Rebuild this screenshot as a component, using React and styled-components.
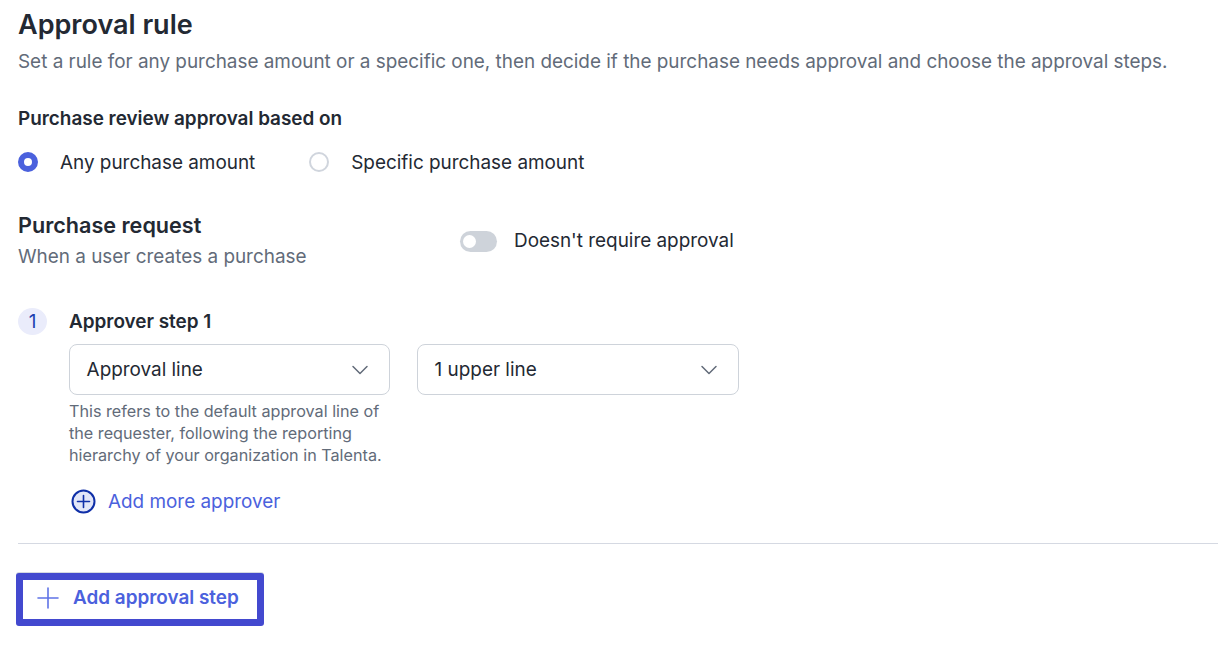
import React from "react";
import styled, { createGlobalStyle } from "styled-components";

const Global = createGlobalStyle`
  html, body { margin: 0; padding: 0; background: #fff; }
  body { font-family: Inter, "Liberation Sans", sans-serif; color: #232933; overflow: hidden; }
`;
const Page = styled.div`
  width: 1218px; height: 649px; box-sizing: border-box; padding: 8px 0 0 18px; overflow: hidden;
`;
const Title = styled.h1`
  margin: 0; font-size: 27px; line-height: 34px; font-weight: 600;
`;
const Subtitle = styled.p`
  margin: 7px 0 0; font-size: 18.9px; line-height: 26px; color: #626b79; white-space: nowrap;
`;
const Label = styled.div`
  margin-top: 31px; font-size: 18.9px; line-height: 26px; font-weight: 600;
`;
const RadioRow = styled.div`
  display: flex; align-items: center; gap: 54px; margin-top: 17px; height: 26px;
`;
const RadioItem = styled.div`
  display: flex; align-items: center; gap: 22px; font-size: 18.9px;
`;
const RadioDot = styled.span`
  width: 20px; height: 20px; box-sizing: border-box; border-radius: 50%;
  border: ${p => (p.$on ? "6px solid #4b61dd" : "2px solid #d0d5dd")}; background: #fff;
`;
const RequestRow = styled.div`
  display: flex; margin-top: 35px; height: 63px;
`;
const RequestText = styled.div`
  width: 442px;
`;
const RequestTitle = styled.div`
  font-size: 21.6px; line-height: 30px; font-weight: 600;
`;
const RequestSub = styled.div`
  margin-top: 4px; font-size: 18.9px; line-height: 26px; color: #626b79;
`;
const ToggleRow = styled.div`
  display: flex; align-items: center; gap: 17px; height: 30px; font-size: 18.9px; margin-top: 15px;
`;
const Toggle = styled.span`
  position: relative; width: 37px; height: 21px; margin-top: 2px; border-radius: 11px; background: #ced3da;
  &::after { content: ""; position: absolute; left: 3px; top: 4px; width: 13px; height: 13px; border-radius: 50%; background: #fff; }
`;
const Step = styled.div`
  display: flex; margin-top: 35px;
`;
const StepBadge = styled.div`
  width: 29px; height: 27px; border-radius: 50%; background: #eaecfb; color: #1d3fb0;
  display: flex; align-items: center; justify-content: center; font-size: 18.9px; flex: none;
`;
const StepBody = styled.div`
  margin-left: 22px;
`;
const StepTitle = styled.div`
  font-size: 18.9px; line-height: 26px; font-weight: 600; margin-top: 1px;
`;
const Selects = styled.div`
  display: flex; gap: 27px; margin-top: 9px; align-items: flex-start;
`;
const SelectColumn = styled.div`
  width: ${p => p.$w}px;
`;
const Select = styled.div`
  display: flex; align-items: center; justify-content: space-between; box-sizing: border-box;
  height: 51px; padding: 0 20px 0 16.6px; border: 1px solid #ced3da; border-radius: 8px; font-size: 18.9px;
`;
const Help = styled.p`
  margin: 5px 0 0; width: 321px; font-size: 16.2px; line-height: 22px; color: #626b79;
`;
const AddMore = styled.div`
  display: flex; align-items: center; gap: 12px; margin: 20px 0 0 2px; height: 30px;
  font-size: 18.9px; color: #4b61dd;
`;
const Divider = styled.hr`
  margin: 27px 0 0; border: 0; height: 1px; background: #d5d9e2;
`;
const AddStep = styled.button`
  display: flex; align-items: center; gap: 14px; box-sizing: border-box; margin: 29px 0 0 -2px;
  width: 248px; height: 53px; padding: 0 0 4px 14px; background: #fff;
  border: 7px solid #4349cf; border-radius: 3px; box-shadow: 0 -1px 0 #d5d9e2;
  font: 600 18.9px Inter, sans-serif; color: #4b61dd;
`;
const AddStepText = styled.span`
  margin-top: -1px;
`;
const Chevron = () => (
  <svg width="18" height="18" viewBox="0 0 18 18" fill="none" stroke="#626b79" strokeWidth="1.5" strokeLinecap="round" strokeLinejoin="round">
    <path d="M2 5.5 L9 12.5 L16 5.5" />
  </svg>
);

export default function App() {
  return (
    <Page>
      <Global />
      <Title>Approval rule</Title>
      <Subtitle>Set a rule for any purchase amount or a specific one, then decide if the purchase needs approval and choose the approval steps.</Subtitle>
      <Label>Purchase review approval based on</Label>
      <RadioRow>
        <RadioItem><RadioDot $on />Any purchase amount</RadioItem>
        <RadioItem><RadioDot />Specific purchase amount</RadioItem>
      </RadioRow>
      <RequestRow>
        <RequestText>
          <RequestTitle>Purchase request</RequestTitle>
          <RequestSub>When a user creates a purchase</RequestSub>
        </RequestText>
        <ToggleRow><Toggle />Doesn't require approval</ToggleRow>
      </RequestRow>
      <Step>
        <StepBadge>1</StepBadge>
        <StepBody>
          <StepTitle>Approver step 1</StepTitle>
          <Selects>
            <SelectColumn $w={321}>
              <Select>Approval line<Chevron /></Select>
              <Help>This refers to the default approval line of the requester, following the reporting hierarchy of your organization in Talenta.</Help>
            </SelectColumn>
            <SelectColumn $w={322}>
              <Select>1 upper line<Chevron /></Select>
            </SelectColumn>
          </Selects>
          <AddMore>
            <svg width="25" height="25" viewBox="0 0 25 25" fill="none">
              <circle cx="12.5" cy="12.5" r="11" fill="#e2e6f8" stroke="#0f2fa8" strokeWidth="2" />
              <path d="M12.5 6.5v12M6.5 12.5h12" stroke="#0f2fa8" strokeWidth="1.6" strokeLinecap="round" />
            </svg>
            Add more approver
          </AddMore>
        </StepBody>
      </Step>
      <Divider />
      <AddStep>
        <svg width="22" height="22" viewBox="0 0 22 22" fill="none" stroke="#5f73e6" strokeWidth="1.6" strokeLinecap="round">
          <path d="M11 1v20M1 11h20" />
        </svg>
        <AddStepText>Add approval step</AddStepText>
      </AddStep>
    </Page>
  );
}
